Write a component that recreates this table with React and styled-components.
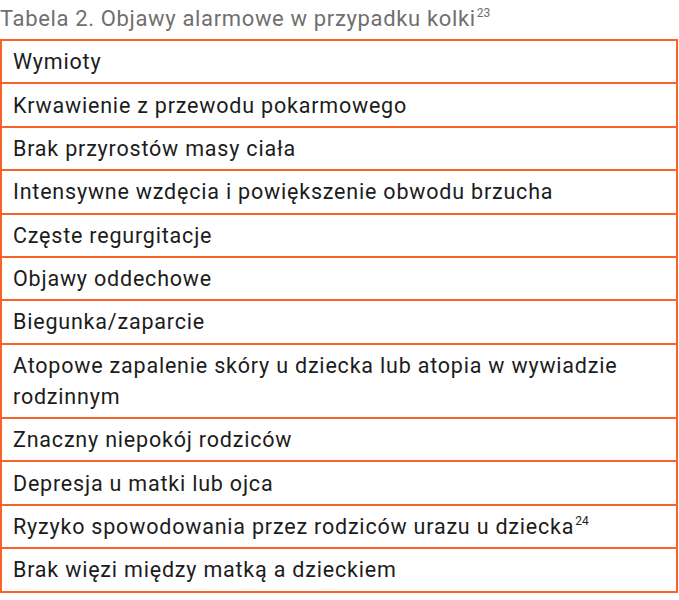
import React from "react";
import styled, { createGlobalStyle } from "styled-components";

const GlobalStyle = createGlobalStyle`
  body {
    margin: 0;
    background: #ffffff;
    font-family: Roboto, "Liberation Sans", sans-serif;
  }
`;

const Wrapper = styled.div`
  width: 679px;
`;

const Caption = styled.div`
  font-size: 22px;
  line-height: 28px;
  letter-spacing: 0.65px;
  color: #6f6f6f;
  padding: 5px 0 6px 0;
  white-space: nowrap;
`;

const Sup = styled.sup`
  font-size: 12px;
  line-height: 0;
  letter-spacing: 0;
  vertical-align: 9px;
  margin-left: 1px;
`;

const Table = styled.table`
  width: 678px;
  border-collapse: collapse;
`;

const Cell = styled.td`
  border: 2px solid #f7632a;
  padding: 5.2px 12px 5.2px 11px;
  font-size: 21.5px;
  line-height: 31px;
  letter-spacing: 0.8px;
  color: #1c1c1c;
`;

const rows = [
  "Wymioty",
  "Krwawienie z przewodu pokarmowego",
  "Brak przyrostów masy ciała",
  "Intensywne wzdęcia i powiększenie obwodu brzucha",
  "Częste regurgitacje",
  "Objawy oddechowe",
  "Biegunka/zaparcie",
  "Atopowe zapalenie skóry u dziecka lub atopia w wywiadzie rodzinnym",
  "Znaczny niepokój rodziców",
  "Depresja u matki lub ojca",
  ["Ryzyko spowodowania przez rodziców urazu u dziecka", "24"],
  "Brak więzi między matką a dzieckiem",
];

export default function App() {
  return (
    <Wrapper>
      <GlobalStyle />
      <Caption>
        Tabela 2. Objawy alarmowe w przypadku kolki<Sup>23</Sup>
      </Caption>
      <Table>
        <tbody>
          {rows.map((r, i) => (
            <tr key={i}>
              <Cell>
                {Array.isArray(r) ? (
                  <>
                    {r[0]}
                    <Sup>{r[1]}</Sup>
                  </>
                ) : (
                  r
                )}
              </Cell>
            </tr>
          ))}
        </tbody>
      </Table>
    </Wrapper>
  );
}
